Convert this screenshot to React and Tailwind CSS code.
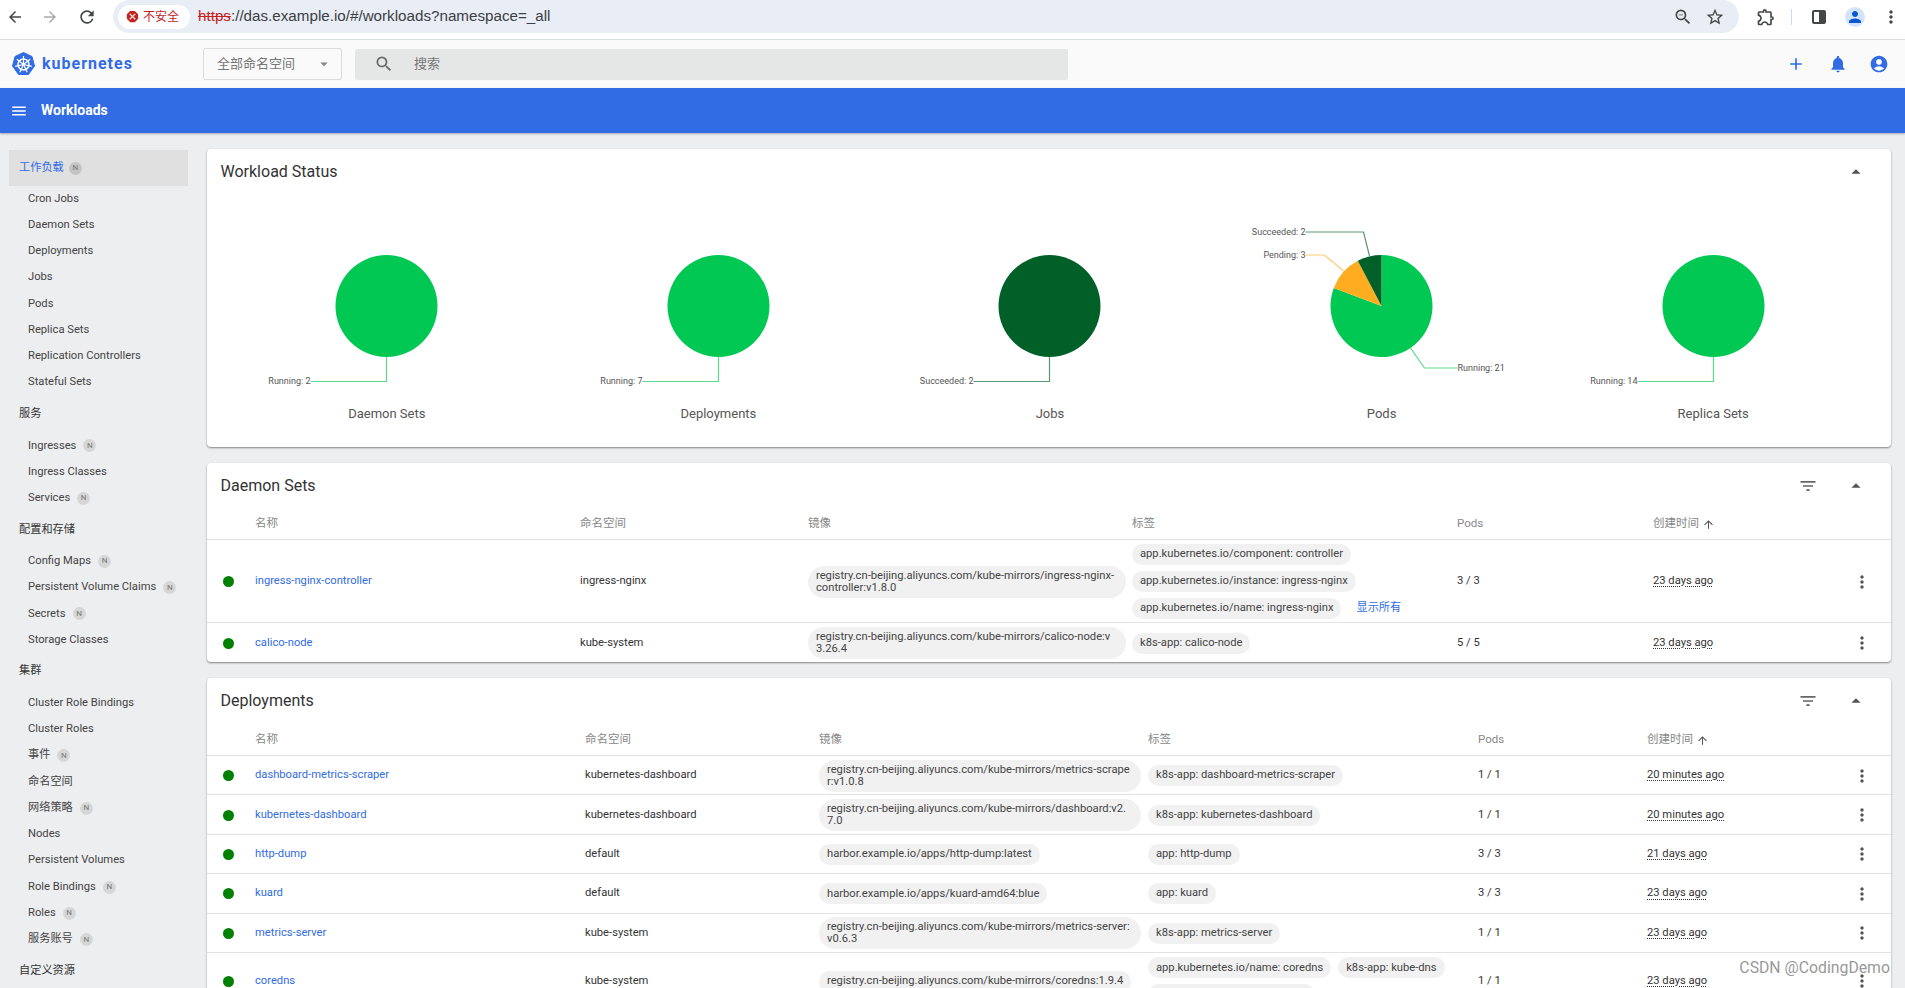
import {
  MdAdd,
  MdAccountCircle,
  MdArrowBack,
  MdArrowDropDown,
  MdArrowDropUp,
  MdArrowForward,
  MdArrowUpward,
  MdDangerous,
  MdFilterList,
  MdMenu,
  MdMoreVert,
  MdNotifications,
  MdOutlineExtension,
  MdPerson,
  MdRefresh,
  MdSearch,
  MdStarBorder,
  MdZoomOut,
} from "react-icons/md";

const RUNNING = "#00c853";
const PENDING = "#ffad20";
const SUCCEEDED = "#006028";

const nav = [
  { type: "active", label: "工作负载", n: true },
  { label: "Cron Jobs" },
  { label: "Daemon Sets" },
  { label: "Deployments" },
  { label: "Jobs" },
  { label: "Pods" },
  { label: "Replica Sets" },
  { label: "Replication Controllers" },
  { label: "Stateful Sets" },
  { type: "section", label: "服务" },
  { label: "Ingresses", n: true },
  { label: "Ingress Classes" },
  { label: "Services", n: true },
  { type: "section", label: "配置和存储" },
  { label: "Config Maps", n: true },
  { label: "Persistent Volume Claims", n: true },
  { label: "Secrets", n: true },
  { label: "Storage Classes" },
  { type: "section", label: "集群" },
  { label: "Cluster Role Bindings" },
  { label: "Cluster Roles" },
  { label: "事件", n: true },
  { label: "命名空间" },
  { label: "网络策略", n: true },
  { label: "Nodes" },
  { label: "Persistent Volumes" },
  { label: "Role Bindings", n: true },
  { label: "Roles", n: true },
  { label: "服务账号", n: true },
  { type: "section", label: "自定义资源" },
];

const charts = [
  {
    title: "Daemon Sets",
    slices: [{ value: 2, color: RUNNING }],
    leaders: [{ label: "Running: 2", color: RUNNING, points: "0,51 0,75.5 -76,75.5", x: -76, y: 76, anchor: "end" }],
  },
  {
    title: "Deployments",
    slices: [{ value: 7, color: RUNNING }],
    leaders: [{ label: "Running: 7", color: RUNNING, points: "0,51 0,75.5 -76,75.5", x: -76, y: 76, anchor: "end" }],
  },
  {
    title: "Jobs",
    slices: [{ value: 2, color: SUCCEEDED }],
    leaders: [{ label: "Succeeded: 2", color: SUCCEEDED, points: "0,51 0,75.5 -76,75.5", x: -76, y: 76, anchor: "end" }],
  },
  {
    title: "Pods",
    slices: [
      { value: 21, color: RUNNING },
      { value: 3, color: PENDING },
      { value: 2, color: SUCCEEDED },
    ],
    leaders: [
      { label: "Running: 21", color: RUNNING, points: "29,42 43,62 76,62", x: 76, y: 63, anchor: "start" },
      { label: "Pending: 3", color: PENDING, points: "-38,-35 -57,-51 -76,-51", x: -76, y: -50, anchor: "end" },
      { label: "Succeeded: 2", color: SUCCEEDED, points: "-12,-50 -18,-74 -76,-74", x: -76, y: -73, anchor: "end" },
    ],
  },
  {
    title: "Replica Sets",
    slices: [{ value: 14, color: RUNNING }],
    leaders: [{ label: "Running: 14", color: RUNNING, points: "0,51 0,75.5 -76,75.5", x: -76, y: 76, anchor: "end" }],
  },
];

const daemonSets = [
  {
    name: "ingress-nginx-controller",
    namespace: "ingress-nginx",
    image: "registry.cn-beijing.aliyuncs.com/kube-mirrors/ingress-nginx-\ncontroller:v1.8.0",
    labels: ["app.kubernetes.io/component: controller", "app.kubernetes.io/instance: ingress-nginx", "app.kubernetes.io/name: ingress-nginx"],
    showAll: true,
    pods: "3 / 3",
    age: "23 days ago",
    height: "h-[83px]",
  },
  {
    name: "calico-node",
    namespace: "kube-system",
    image: "registry.cn-beijing.aliyuncs.com/kube-mirrors/calico-node:v\n3.26.4",
    labels: ["k8s-app: calico-node"],
    pods: "5 / 5",
    age: "23 days ago",
    height: "h-[39px]",
    last: true,
  },
];

const deployments = [
  {
    name: "dashboard-metrics-scraper",
    namespace: "kubernetes-dashboard",
    image: "registry.cn-beijing.aliyuncs.com/kube-mirrors/metrics-scrape\nr:v1.0.8",
    labels: ["k8s-app: dashboard-metrics-scraper"],
    pods: "1 / 1",
    age: "20 minutes ago",
  },
  {
    name: "kubernetes-dashboard",
    namespace: "kubernetes-dashboard",
    image: "registry.cn-beijing.aliyuncs.com/kube-mirrors/dashboard:v2.\n7.0",
    labels: ["k8s-app: kubernetes-dashboard"],
    pods: "1 / 1",
    age: "20 minutes ago",
  },
  {
    name: "http-dump",
    namespace: "default",
    image: "harbor.example.io/apps/http-dump:latest",
    labels: ["app: http-dump"],
    pods: "3 / 3",
    age: "21 days ago",
  },
  {
    name: "kuard",
    namespace: "default",
    image: "harbor.example.io/apps/kuard-amd64:blue",
    labels: ["app: kuard"],
    pods: "3 / 3",
    age: "23 days ago",
  },
  {
    name: "metrics-server",
    namespace: "kube-system",
    image: "registry.cn-beijing.aliyuncs.com/kube-mirrors/metrics-server:\nv0.6.3",
    labels: ["k8s-app: metrics-server"],
    pods: "1 / 1",
    age: "23 days ago",
  },
  {
    name: "coredns",
    namespace: "kube-system",
    image: "registry.cn-beijing.aliyuncs.com/kube-mirrors/coredns:1.9.4",
    labels: ["app.kubernetes.io/name: coredns", "k8s-app: kube-dns", "kubernetes.io/name: CoreDNS"],
    pods: "1 / 1",
    age: "23 days ago",
    height: "h-[56px]",
    last: true,
  },
];

function KubeLogo() {
  const spokes = [0, 1, 2, 3, 4, 5, 6];
  return (
    <svg width="23" height="24" viewBox="0 0 46 48" className="shrink-0">
      <path d="M23 1 L40 9 L45 28 L33 45 L13 45 L1 28 L6 9 Z" fill="#326ce5" stroke="#326ce5" strokeWidth="2" strokeLinejoin="round" />
      <circle cx="23" cy="25" r="11" fill="none" stroke="#fff" strokeWidth="3" />
      <circle cx="23" cy="25" r="3" fill="#fff" />
      {spokes.map((i) => (
        <line key={i} x1="23" y1="25" x2="23" y2="8" stroke="#fff" strokeWidth="2.4" transform={`rotate(${(i * 360) / 7} 23 25)`} />
      ))}
    </svg>
  );
}

function ChromeBar() {
  return (
    <div className="h-[40px] shrink-0 flex items-start bg-white border-b border-[#dadce0]">
      <div className="flex items-center h-[33px] pl-[6px] w-[113px] text-[#444746]">
        <MdArrowBack size={18} />
        <MdArrowForward size={18} className="ml-[17px] text-[#a9abad]" />
        <MdRefresh size={20} className="ml-[18px]" />
      </div>
      <div className="flex items-center h-[33px] w-[1626px] rounded-r-[17px] rounded-l-[17px] bg-[#e9edf6] pl-[5px] pr-[14px]">
        <div className="flex items-center h-[24px] w-[72px] bg-white rounded-[12px] pl-[7px] gap-[3px] text-[12px] text-[#c5221f]">
          <MdDangerous size={15} />
          <span>不安全</span>
        </div>
        <div className="ml-[8px] text-[15.2px] text-[#3c4043] [font-family:'Liberation_Sans',Arial,sans-serif]">
          <span className="text-[#c5221f] line-through">https</span>://das.example.io/#/workloads?namespace=_all
        </div>
        <MdZoomOut size={20} className="ml-auto text-[#444746]" />
        <MdStarBorder size={20} className="ml-[12px] text-[#444746]" />
      </div>
      <div className="flex items-center h-[33px] pl-[16px] text-[#444746]">
        <MdOutlineExtension size={20} className="ml-[1px]" />
        <div className="ml-[15px] w-px h-[16px] bg-[#c9d7f3]" />
        <div className="ml-[20px] w-[14px] h-[14px] rounded-[2px] border-2 border-[#444746] bg-[linear-gradient(90deg,#fff_50%,#444746_50%)]" />
        <div className="ml-[19px] w-[20px] h-[20px] rounded-full bg-[#d3e3fd] flex items-center justify-center text-[#0b57d0]">
          <MdPerson size={18} />
        </div>
        <MdMoreVert size={20} className="ml-[16px]" />
      </div>
    </div>
  );
}

function TopBar() {
  return (
    <div className="h-[48px] shrink-0 flex items-center bg-[#fafafa]">
      <div className="w-[203px] pl-[12px] flex items-center gap-[7px]">
        <KubeLogo />
        <span className="text-[16px] font-bold tracking-[1px] text-[#326ce5]">kubernetes</span>
      </div>
      <div className="w-[139px] h-[32px] border border-[#dcdcdc] rounded-[2px] flex items-center pl-[13px] text-[13px] text-[#777]">
        <span>全部命名空间</span>
        <MdArrowDropDown size={18} className="ml-auto mr-[8px] text-[#888]" />
      </div>
      <div className="ml-[13px] w-[713px] h-[31px] bg-[#e5e7e7] rounded-[2px] flex items-center pl-[19px] text-[13px] text-[#777]">
        <MdSearch size={20} className="text-[#666]" />
        <span className="ml-[20px]">搜索</span>
      </div>
      <div className="ml-auto flex items-center text-[#326ce5]">
        <MdAdd size={20} />
        <MdNotifications size={20} className="ml-[22px]" />
        <MdAccountCircle size={20} className="ml-[21px] mr-[16px]" />
      </div>
    </div>
  );
}

function Badge({ active }) {
  return (
    <span className={`w-[13px] h-[13px] rounded-full flex items-center justify-center text-[8px] text-[#777] ${active ? "ml-[5px] bg-[#c4c4c4]" : "ml-[7px] bg-[#d6d6d6]"}`}>
      N
    </span>
  );
}

function Sidebar() {
  return (
    <aside className="w-[207px] shrink-0 pt-[17px] text-[11.2px]">
      {nav.map((item) => {
        if (item.type === "active") {
          return (
            <div key={item.label} className="ml-[9px] w-[179px] h-[36px] bg-[#e0e0e0] flex items-center pl-[10px] text-[#326ce5]">
              {item.label}
              <Badge active />
            </div>
          );
        }
        if (item.type === "section") {
          return (
            <div key={item.label} className="h-[36.8px] flex items-center pl-[19px] text-[#333]">
              {item.label}
            </div>
          );
        }
        return (
          <div key={item.label} className="h-[26.25px] flex items-center pl-[28px] text-[#444]">
            {item.label}
            {item.n && <Badge />}
          </div>
        );
      })}
    </aside>
  );
}

function slicePath(start, end) {
  const r = 51;
  const x1 = Math.sin(start) * r;
  const y1 = -Math.cos(start) * r;
  const x2 = Math.sin(end) * r;
  const y2 = -Math.cos(end) * r;
  const large = end - start > Math.PI ? 1 : 0;
  return `M0 0 L${x1} ${y1} A${r} ${r} 0 ${large} 1 ${x2} ${y2} Z`;
}

function Pie({ chart }) {
  const total = chart.slices.reduce((sum, s) => sum + s.value, 0);
  let angle = 0;
  return (
    <div className="flex-1 flex flex-col items-center">
      <svg width="331" height="200" viewBox="-165.5 -111 331 200">
        {chart.leaders.map((l) => (
          <g key={l.label}>
            <polyline points={l.points} fill="none" stroke={l.color} strokeOpacity="0.65" strokeWidth="1.2" />
            <text x={l.x} y={l.y} textAnchor={l.anchor} dominantBaseline="middle" fontSize="9" fill="#555">
              {l.label}
            </text>
          </g>
        ))}
        {chart.slices.length === 1 && <circle r="51" fill={chart.slices[0].color} />}
        {chart.slices.length > 1 &&
          chart.slices.map((s) => {
            const start = angle;
            angle += (s.value / total) * Math.PI * 2;
            return <path key={s.color} d={slicePath(start, angle)} fill={s.color} />;
          })}
      </svg>
      <div className="mt-[9px] h-[20px] leading-[20px] text-[13px] text-[#555]">{chart.title}</div>
    </div>
  );
}

function Card({ children }) {
  return <section className="bg-white rounded-[4px] shadow-[0_1px_2px_rgba(0,0,0,0.45)]">{children}</section>;
}

function Chip({ children }) {
  return <span className="inline-flex items-center h-[21px] px-[8px] rounded-[11px] bg-[#f1f1f1] text-[11.2px] text-[#444] whitespace-nowrap">{children}</span>;
}

function ResourceTable({ title, rows, gridClass, titleHeight, pillWidth }) {
  return (
    <Card>
      <div className={`flex items-center pl-[13.5px] pr-[24px] ${titleHeight}`}>
        <h2 className="text-[16px] text-[#333]">{title}</h2>
        <MdFilterList size={20} className="ml-auto text-[#666]" />
        <MdArrowDropUp size={22} className="ml-[27px] text-[#555]" />
      </div>
      <div className={`grid items-center h-[31px] border-b border-[#e2e2e2] text-[11.5px] text-[#888] ${gridClass}`}>
        <span />
        <span>名称</span>
        <span>命名空间</span>
        <span>镜像</span>
        <span>标签</span>
        <span>Pods</span>
        <span className="flex items-center gap-[3px]">
          创建时间
          <MdArrowUpward size={13} className="text-[#555]" />
        </span>
        <span />
      </div>
      {rows.map((row) => (
        <div
          key={row.name}
          className={`grid items-center pt-[1px] text-[11.2px] text-[#333] ${gridClass} ${row.height || "h-[39.4px]"} ${row.last ? "" : "border-b border-[#e2e2e2]"}`}
        >
          <span className="ml-[16px] w-[11px] h-[11px] rounded-full bg-[#008000]" />
          <span className="text-[#326ce5]">{row.name}</span>
          <span>{row.namespace}</span>
          <span className={`justify-self-start px-[8px] rounded-[16px] bg-[#f1f1f1] text-[#444] whitespace-pre ${row.image.includes("\n") ? `${pillWidth} py-[4px] leading-[12px]` : "py-[4.5px] leading-[12px]"}`}>
            {row.image}
          </span>
          <div className="flex flex-wrap items-center gap-x-[7px] gap-y-[6px] pr-[10px]">
            {row.labels.map((label) => (
              <Chip key={label}>{label}</Chip>
            ))}
            {row.showAll && <span className="ml-[8px] text-[#326ce5]">显示所有</span>}
          </div>
          <span>{row.pods}</span>
          <span>
            <span className="underline decoration-dotted underline-offset-2">{row.age}</span>
          </span>
          <MdMoreVert size={20} className="justify-self-center text-[#555]" />
        </div>
      ))}
    </Card>
  );
}

export default function App() {
  return (
    <div className="relative h-screen overflow-hidden flex flex-col bg-[#edeef0] [font-family:Roboto,'Noto_Sans_CJK_SC',sans-serif]">
      <ChromeBar />
      <TopBar />
      <div className="h-[45px] shrink-0 flex items-center pl-[10px] bg-[#326ce5] text-white shadow-[0_1px_2px_rgba(0,0,0,0.3)]">
        <MdMenu size={18} />
        <h1 className="ml-[13px] text-[14px] font-bold">Workloads</h1>
      </div>
      <div className="flex flex-1 min-h-0">
        <Sidebar />
        <main className="flex-1 min-w-0 pt-[16px] pr-[14px] flex flex-col gap-[16px]">
          <Card>
            <div className="flex items-center h-[46px] pl-[13.5px] pr-[24px]">
              <h2 className="text-[16px] text-[#333]">Workload Status</h2>
              <MdArrowDropUp size={22} className="ml-auto text-[#555]" />
            </div>
            <div className="flex pl-[14px] pr-[12px] pb-[23px]">
              {charts.map((chart) => (
                <Pie key={chart.title} chart={chart} />
              ))}
            </div>
          </Card>
          <ResourceTable title="Daemon Sets" rows={daemonSets} titleHeight="h-[46px]" pillWidth="w-[318px]" gridClass="grid-cols-[48px_325px_228px_324px_325px_196px_1fr_58px]" />
          <ResourceTable title="Deployments" rows={deployments} titleHeight="h-[47px] pb-[2px]" pillWidth="w-[322px]" gridClass="grid-cols-[48px_330px_234px_329px_330px_169px_1fr_58px]" />
        </main>
      </div>
      <div className="absolute right-[15px] bottom-[8px] text-[15.8px] text-[#999]">CSDN @CodingDemo</div>
    </div>
  );
}
